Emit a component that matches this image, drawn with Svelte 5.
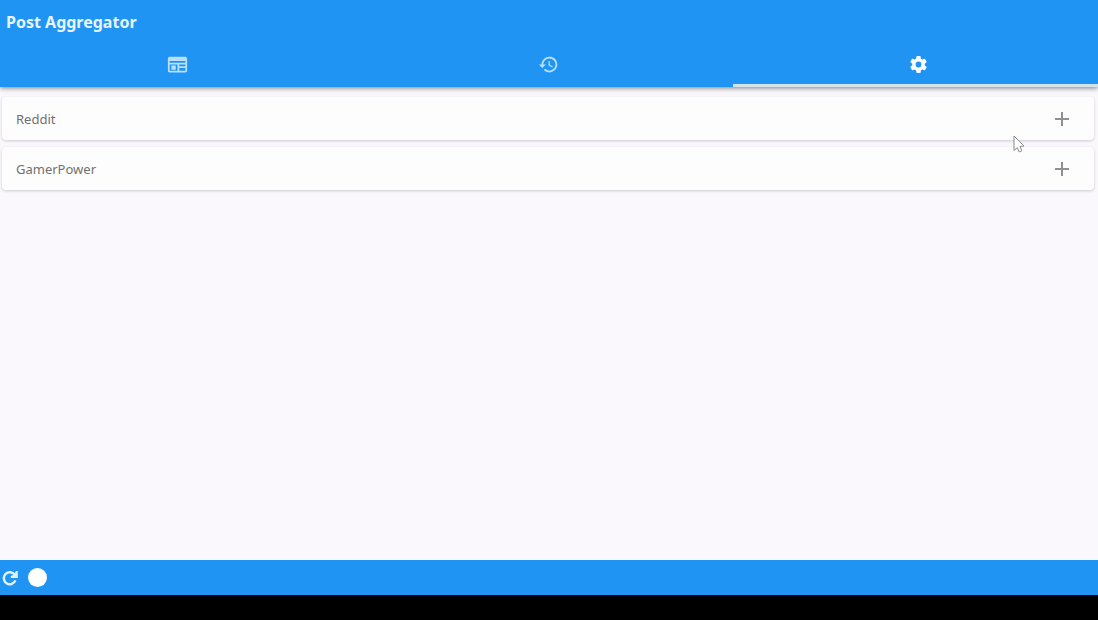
<script>
  let activeTab = $state('settings');
  let openSources = $state({});

  const tabs = [
    { id: 'posts', label: 'Posts' },
    { id: 'history', label: 'History' },
    { id: 'settings', label: 'Settings' }
  ];

  const sources = [
    { id: 'reddit', name: 'Reddit' },
    { id: 'gamerpower', name: 'GamerPower' }
  ];

  function toggle(id) {
    openSources[id] = !openSources[id];
  }
</script>

<div class="app">
  <header class="top-bar">
    <h1 class="title">Post Aggregator</h1>
    <div class="tabs" role="tablist">
      {#each tabs as tab (tab.id)}
        <button
          type="button"
          class="tab"
          class:is-active={activeTab === tab.id}
          role="tab"
          aria-selected={activeTab === tab.id}
          aria-label={tab.label}
          onclick={() => (activeTab = tab.id)}
        >
          {#if tab.id === 'posts'}
            <svg class="icon" viewBox="0 0 24 24" aria-hidden="true">
              <path fill-rule="evenodd" d="M3 3h18a2 2 0 0 1 2 2v14a2 2 0 0 1-2 2H3a2 2 0 0 1-2-2V5a2 2 0 0 1 2-2zm0 5v2h18V8zm0 4v7h9v-7zm11 0v2h7v-2zm0 4v3h7v-3zM5 13h5v5H5z" />
            </svg>
          {:else if tab.id === 'history'}
            <svg class="icon" viewBox="0 0 24 24" aria-hidden="true">
              <path d="M13 3a9 9 0 0 0-9 9H1l3.89 3.89.07.14L9 12H6a7 7 0 1 1 7 7 6.9 6.9 0 0 1-4.94-2.06l-1.42 1.42A9 9 0 1 0 13 3zm-1 5v5l4.28 2.54.72-1.21-3.5-2.08V8z" />
            </svg>
          {:else}
            <svg class="icon" viewBox="0 0 24 24" aria-hidden="true">
              <path d="M19.14 12.94c.04-.3.06-.61.06-.94s-.02-.64-.07-.94l2.03-1.58a.49.49 0 0 0 .12-.61l-1.92-3.32a.49.49 0 0 0-.59-.22l-2.39.96a7 7 0 0 0-1.62-.94l-.36-2.54a.48.48 0 0 0-.48-.41h-3.84a.47.47 0 0 0-.47.41l-.36 2.54c-.59.24-1.13.57-1.62.94l-2.39-.96a.48.48 0 0 0-.59.22L2.74 8.87a.47.47 0 0 0 .12.61l2.03 1.58a6 6 0 0 0 0 1.88l-2.03 1.58a.49.49 0 0 0-.12.61l1.92 3.32c.12.22.37.29.59.22l2.39-.96c.5.38 1.03.7 1.62.94l.36 2.54c.05.24.24.41.48.41h3.84c.24 0 .44-.17.47-.41l.36-2.54a7 7 0 0 0 1.62-.94l2.39.96c.22.08.47 0 .59-.22l1.92-3.32a.47.47 0 0 0-.12-.61zM12 15.3a3.3 3.3 0 1 1 0-6.6 3.3 3.3 0 0 1 0 6.6z" />
            </svg>
          {/if}
        </button>
      {/each}
    </div>
  </header>

  <main class="content">
    {#each sources as source (source.id)}
      <button
        type="button"
        class="source"
        aria-expanded={!!openSources[source.id]}
        onclick={() => toggle(source.id)}
      >
        <span>{source.name}</span>
        <svg class="expand" viewBox="0 0 14 14" aria-hidden="true">
          <path d={openSources[source.id] ? 'M0 7h14' : 'M0 7h14M7 0v14'} />
        </svg>
      </button>
    {/each}
  </main>

  <footer class="bottom-bar">
    <button type="button" class="refresh" aria-label="Refresh">
      <svg viewBox="0 0 16 16" aria-hidden="true">
        <path class="arc" d="M13 5.2A6 6 0 1 0 13.4 10.4" />
        <path class="head" d="M15.8 1v7H8.8V6l3-1.2L14 1z" />
      </svg>
    </button>
    <button type="button" class="status" aria-label="Status"></button>
  </footer>

  <svg class="pointer" viewBox="0 0 12 18" aria-hidden="true">
    <path d="M1 1v14.5l3.3-2.8 1.9 4.2 2.6-1.1L7 11.5l4-.5z" />
  </svg>
</div>

<style>
  :global(body) {
    margin: 0;
    background: #000;
  }

  .app {
    position: relative;
    display: flex;
    flex-direction: column;
    box-sizing: border-box;
    min-height: 100vh;
    padding-bottom: 25px;
    overflow: hidden;
    background: #000;
    font-family: "Noto Sans", "Open Sans", sans-serif;
  }

  button {
    margin: 0;
    padding: 0;
    border: 0;
    background: none;
    font: inherit;
    cursor: pointer;
  }

  .top-bar {
    z-index: 1;
    background: #2094f3;
    box-shadow: 0 1px 5px rgba(0, 0, 0, 0.5);
  }

  .title {
    margin: 0;
    padding: 0 6px;
    font-size: 16px;
    font-weight: 700;
    line-height: 44px;
    color: #e6f4ff;
  }

  .tabs {
    display: flex;
    margin: 0 -6px 0 -8px;
  }

  .tab {
    display: flex;
    flex: 1;
    align-items: center;
    justify-content: center;
    height: 43px;
    box-sizing: border-box;
    border-bottom: 3px solid transparent;
    color: #b8e0fc;
  }

  .tab.is-active {
    border-bottom-color: #d3e3ea;
    color: #fff;
  }

  .icon {
    width: 21px;
    height: 21px;
    fill: currentColor;
  }

  .content {
    display: flex;
    flex: 1;
    flex-direction: column;
    gap: 7px;
    padding: 10px 4px 10px 2px;
    background: #faf8fc;
  }

  .source {
    display: flex;
    align-items: center;
    justify-content: space-between;
    height: 43px;
    padding: 0 25px 0 14px;
    border-radius: 4px;
    background: #fefdfe;
    box-shadow: 0 1px 3px rgba(0, 0, 0, 0.18);
    font-size: 13px;
    color: #707070;
  }

  .expand {
    width: 14px;
    height: 14px;
    fill: none;
    stroke: #909090;
    stroke-width: 2;
  }

  .bottom-bar {
    display: flex;
    align-items: center;
    gap: 10px;
    height: 35px;
    padding: 0 2px;
    background: #2094f3;
  }

  .refresh,
  .refresh svg {
    display: block;
    width: 16px;
    height: 16px;
  }

  .arc {
    fill: none;
    stroke: #e0f2ff;
    stroke-width: 2.5;
  }

  .head {
    fill: #e0f2ff;
  }

  .status {
    width: 19px;
    height: 19px;
    border-radius: 50%;
    background: #fff;
  }

  .pointer {
    position: absolute;
    top: 135px;
    left: 1013px;
    z-index: 2;
    width: 12px;
    height: 18px;
    fill: #fff;
    stroke: #8a8a8a;
    pointer-events: none;
  }
</style>
